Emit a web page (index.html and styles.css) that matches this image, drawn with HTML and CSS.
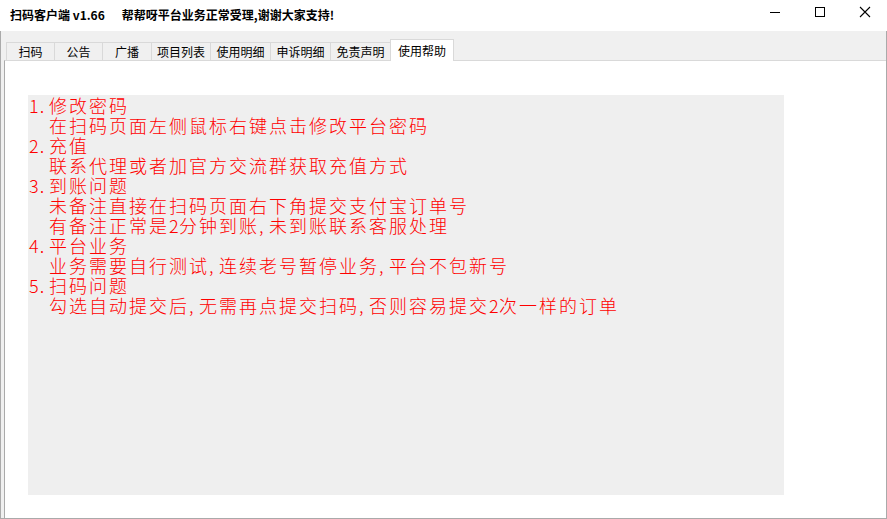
FILE: index.html
```html
<!DOCTYPE html>
<html lang="zh-CN">
<head>
<meta charset="utf-8">
<title>扫码客户端 v1.66</title>
<link rel="stylesheet" href="styles.css">
</head>
<body>
<div class="window">
  <div class="titlebar">
    <div class="title"><span class="app">扫码客户端 v1.66</span><span class="notice">帮帮呀平台业务正常受理,谢谢大家支持!</span></div>
    <div class="controls">
      <div class="ctl"><svg width="12" height="12" viewBox="0 0 12 12"><path d="M1 6.5H11" stroke="#000" stroke-width="1" fill="none"/></svg></div>
      <div class="ctl"><svg width="12" height="12" viewBox="0 0 12 12"><rect x="1.5" y="1.5" width="9" height="9" stroke="#000" stroke-width="1" fill="none"/></svg></div>
      <div class="ctl"><svg width="12" height="12" viewBox="0 0 12 12"><path d="M1 1L11 11M11 1L1 11" stroke="#000" stroke-width="1.1" fill="none"/></svg></div>
    </div>
  </div>
  <div class="frame">
    <div class="tabs">
      <div class="tab t1">扫码</div>
      <div class="tab t2">公告</div>
      <div class="tab t3">广播</div>
      <div class="tab t4">项目列表</div>
      <div class="tab t5">使用明细</div>
      <div class="tab t6">申诉明细</div>
      <div class="tab t7">免责声明</div>
      <div class="tab active">使用帮助</div>
    </div>
    <div class="panel">
      <div class="helpbox">
        <div class="item"><span class="num">1.</span><span>修改密码</span></div>
        <div class="detail">在扫码页面左侧鼠标右键点击修改平台密码</div>
        <div class="item"><span class="num">2.</span><span>充值</span></div>
        <div class="detail">联系代理或者加官方交流群获取充值方式</div>
        <div class="item"><span class="num">3.</span><span>到账问题</span></div>
        <div class="detail">未备注直接在扫码页面右下角提交支付宝订单号</div>
        <div class="detail">有备注正常是<span class="hw">2</span>分钟到账<span class="hw">,</span>未到账联系客服处理</div>
        <div class="item"><span class="num">4.</span><span>平台业务</span></div>
        <div class="detail">业务需要自行测试<span class="hw">,</span>连续老号暂停业务<span class="hw">,</span>平台不包新号</div>
        <div class="item"><span class="num">5.</span><span>扫码问题</span></div>
        <div class="detail">勾选自动提交后<span class="hw">,</span>无需再点提交扫码<span class="hw">,</span>否则容易提交<span class="hw">2</span>次一样的订单</div>
      </div>
    </div>
  </div>
</div>
</body>
</html>
```
FILE: styles.css
```css
html, body {
  margin: 0;
  padding: 0;
  background: #ffffff;
}
body {
  width: 887px;
  height: 519px;
  overflow: hidden;
  font-family: "Noto Sans CJK SC", "Liberation Sans", sans-serif;
}
.window {
  width: 887px;
  height: 519px;
  display: flex;
  flex-direction: column;
}
.titlebar {
  height: 31px;
  display: flex;
  align-items: stretch;
  background: #ffffff;
}
.title {
  flex: 1;
  display: flex;
  align-items: center;
  padding-left: 10px;
  font-size: 12px;
  font-weight: 700;
  color: #000;
  padding-bottom: 2px;
}
.title .notice {
  margin-left: 17px;
}
.controls {
  display: flex;
}
.ctl {
  width: 45px;
  display: flex;
  align-items: center;
  justify-content: center;
  padding-bottom: 8px;
}
.frame {
  flex: 1;
  display: flex;
  flex-direction: column;
  background: #f0f0f0;
  border-left: 1px solid #aaaaaa;
  border-right: 1px solid #aaaaaa;
  border-bottom: 1px solid #aaaaaa;
  min-height: 0;
}
.tabs {
  display: flex;
  align-items: flex-end;
  padding: 8px 0 0 5px;
  height: 21px;
  position: relative;
  z-index: 1;
}
.tab {
  height: 17px;
  border: 1px solid #d9d9d9;
  border-bottom: none;
  margin-left: -1px;
  background: #f0f0f0;
  font-size: 12px;
  line-height: 17px;
  text-align: center;
  color: #000;
  box-sizing: content-box;
}
.t1 { width: 47px; margin-left: 0; }
.t2 { width: 47px; }
.t3 { width: 48px; }
.t4 { width: 58px; }
.t5 { width: 59px; }
.t6 { width: 59px; }
.t7 { width: 59px; }
.tab.active {
  width: 62px;
  height: 21px;
  line-height: 21px;
  background: #ffffff;
  margin-bottom: -1px;
  border-color: #d9d9d9;
}
.panel {
  flex: 1;
  margin-left: 3px;
  background: #ffffff;
  border-top: 1px solid #d9d9d9;
  border-left: 1px solid #aaaaaa;
  padding: 34px 0 23px 23px;
  min-height: 0;
}
.helpbox {
  width: 756px;
  height: 400px;
  background: #efefef;
  padding-left: 1px;
  box-sizing: border-box;
  color: #ff0000;
  font-size: 18px;
  font-weight: 300;
  letter-spacing: 2px;
  line-height: 20px;
}
.item {
  display: flex;
  align-items: baseline;
  height: 20px;
}
.num {
  width: 20px;
  flex: none;
  letter-spacing: 1px;
}
.detail {
  padding-left: 20px;
  height: 20px;
  white-space: nowrap;
}
.hw {
  display: inline-block;
  width: 10px;
  letter-spacing: 0;
}
```
